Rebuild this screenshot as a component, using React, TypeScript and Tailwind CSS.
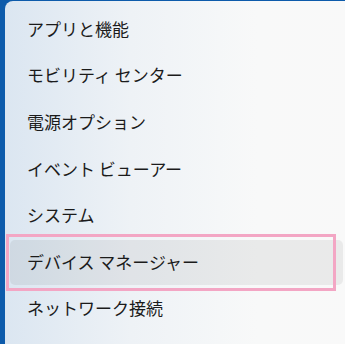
const items = [
  "アプリと機能",
  "モビリティ センター",
  "電源オプション",
  "イベント ビューアー",
  "システム",
  "デバイス マネージャー",
  "ネットワーク接続",
];

export default function App() {
  return (
    <div className="relative h-[344px] w-[345px] overflow-hidden bg-[#0d5bab] pl-[5px] pt-[1px] font-['Noto_Sans_CJK_JP','Noto_Sans',sans-serif]">
      <div className="h-[360px] w-[360px] rounded-tl-[8px] bg-[linear-gradient(to_right,#dbe6f1,#eef2f6_35%,#f8f9f9_70%,#f9f9f9)] pt-[5px]">
        {items.map((label, i) => (
          <div key={label} className="flex h-[46.6px] items-center py-[1px]">
            <div
              className={`ml-[5px] flex h-full w-[333px] items-center rounded-[5px] pb-[2px] pl-[17px] text-[17px] leading-none text-[#1b1b1b] ${
                i === 5 ? "bg-black/[0.06]" : ""
              }`}
            >
              {label}
            </div>
          </div>
        ))}
      </div>
      <div className="absolute left-[6px] top-[234px] h-[57px] w-[330px] border-[3px] border-[#f3a6c4]" />
    </div>
  );
}
